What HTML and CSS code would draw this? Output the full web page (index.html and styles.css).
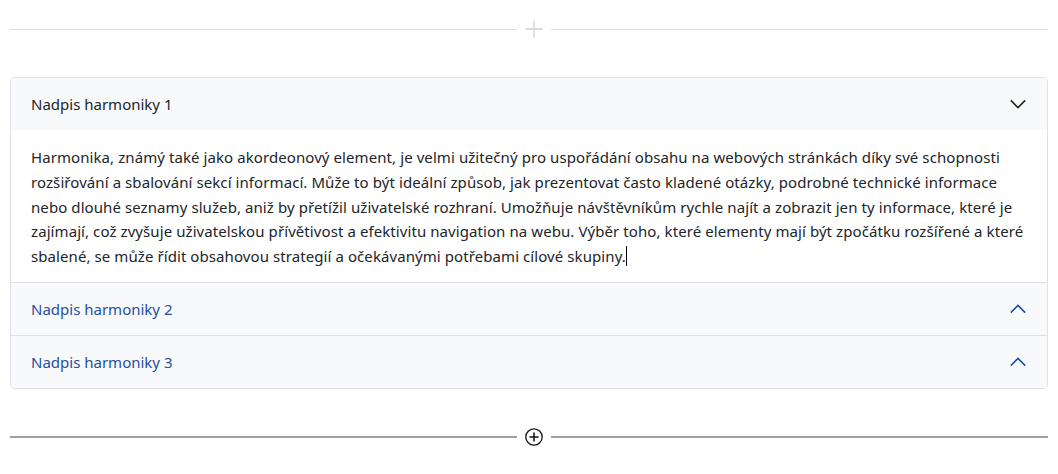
FILE: index.html
```html
<!DOCTYPE html>
<html lang="cs">
<head>
<meta charset="utf-8">
<title>Harmonika</title>
<link rel="stylesheet" href="styles.css">
</head>
<body>
<div class="page">
  <div class="divider divider-light">
    <span class="line line-left"></span>
    <svg class="div-icon" width="18" height="18" viewBox="0 0 18 18" aria-hidden="true">
      <path d="M9 0.5V17.5M0.5 9H17.5" stroke="#d0d0d0" stroke-width="1.3" fill="none"/>
    </svg>
    <span class="line line-right"></span>
  </div>

  <div class="accordion">
    <div class="acc-item">
      <div class="acc-header open">
        <span class="acc-title">Nadpis harmoniky 1</span>
        <svg class="chev" width="18" height="18" viewBox="0 0 16 16" aria-hidden="true">
          <path d="M1.6 4.8L8 11.2L14.4 4.8" stroke="#212529" stroke-width="1.4" fill="none"/>
        </svg>
      </div>
      <div class="acc-body">Harmonika, známý také jako akordeonový element, je velmi užitečný pro uspořádání obsahu na webových stránkách díky své schopnosti rozšiřování a sbalování sekcí informací. Může to být ideální způsob, jak prezentovat často kladené otázky, podrobné technické informace nebo dlouhé seznamy služeb, aniž by přetížil uživatelské rozhraní. Umožňuje návštěvníkům rychle najít a zobrazit jen ty informace, které je zajímají, což zvyšuje uživatelskou přívětivost a efektivitu navigation na webu. Výběr toho, které elementy mají být zpočátku rozšířené a které sbalené, se může řídit obsahovou strategií a očekávanými potřebami cílové skupiny.<span class="caret"></span></div>
    </div>
    <div class="acc-item">
      <div class="acc-header collapsed">
        <span class="acc-title">Nadpis harmoniky 2</span>
        <svg class="chev" width="18" height="18" viewBox="0 0 16 16" aria-hidden="true">
          <path d="M1.6 11.2L8 4.8L14.4 11.2" stroke="#1f4fa3" stroke-width="1.4" fill="none"/>
        </svg>
      </div>
    </div>
    <div class="acc-item">
      <div class="acc-header collapsed">
        <span class="acc-title">Nadpis harmoniky 3</span>
        <svg class="chev" width="18" height="18" viewBox="0 0 16 16" aria-hidden="true">
          <path d="M1.6 11.2L8 4.8L14.4 11.2" stroke="#1f4fa3" stroke-width="1.4" fill="none"/>
        </svg>
      </div>
    </div>
  </div>

  <div class="divider divider-dark">
    <span class="line line-left"></span>
    <svg class="div-icon" width="18" height="18" viewBox="0 0 18 18" aria-hidden="true">
      <circle cx="9" cy="9" r="8.2" stroke="#111" stroke-width="1.3" fill="none"/>
      <path d="M9 4.5V13.5M4.5 9H13.5" stroke="#111" stroke-width="1.5" fill="none"/>
    </svg>
    <span class="line line-right"></span>
  </div>
</div>
</body>
</html>
```

FILE: styles.css
```css
html, body {
  margin: 0;
  padding: 0;
  background: #ffffff;
}

body {
  font-family: "Noto Sans", "Open Sans", "Liberation Sans", sans-serif;
  color: #212529;
}

.page {
  padding: 20px 10px 0 10px;
}

.divider {
  display: flex;
  align-items: center;
  gap: 8px;
  height: 18px;
}

.divider .line {
  height: 1px;
}

.divider .line-left {
  flex: 0 0 507px;
}

.divider .line-right {
  flex: 1;
}

.divider-light .line {
  background: #dcdcdc;
}

.divider-dark .line {
  background: #a0a0a0;
  height: 1.5px;
}

.div-icon {
  flex: none;
  display: block;
}

.accordion {
  margin: 39px 0;
  border: 1px solid #dee2e6;
  border-radius: 4px;
  overflow: hidden;
}

.acc-item + .acc-item {
  border-top: 1px solid #dee2e6;
}

.acc-header {
  display: flex;
  align-items: center;
  justify-content: space-between;
  height: 52px;
  padding: 0 20px 0 20px;
  background: #f8f9fa;
  font-size: 15px;
}

.acc-header.open .acc-title {
  color: #212529;
}

.acc-header.collapsed .acc-title {
  color: #1f4fa3;
}

.chev {
  display: block;
}

.acc-body {
  padding: 15px 20px 13px 20px;
  font-size: 15px;
  line-height: 24.75px;
  letter-spacing: 0.08px;
}

.caret {
  display: inline-block;
  width: 1px;
  height: 20px;
  background: #000;
  vertical-align: -4px;
}
```
